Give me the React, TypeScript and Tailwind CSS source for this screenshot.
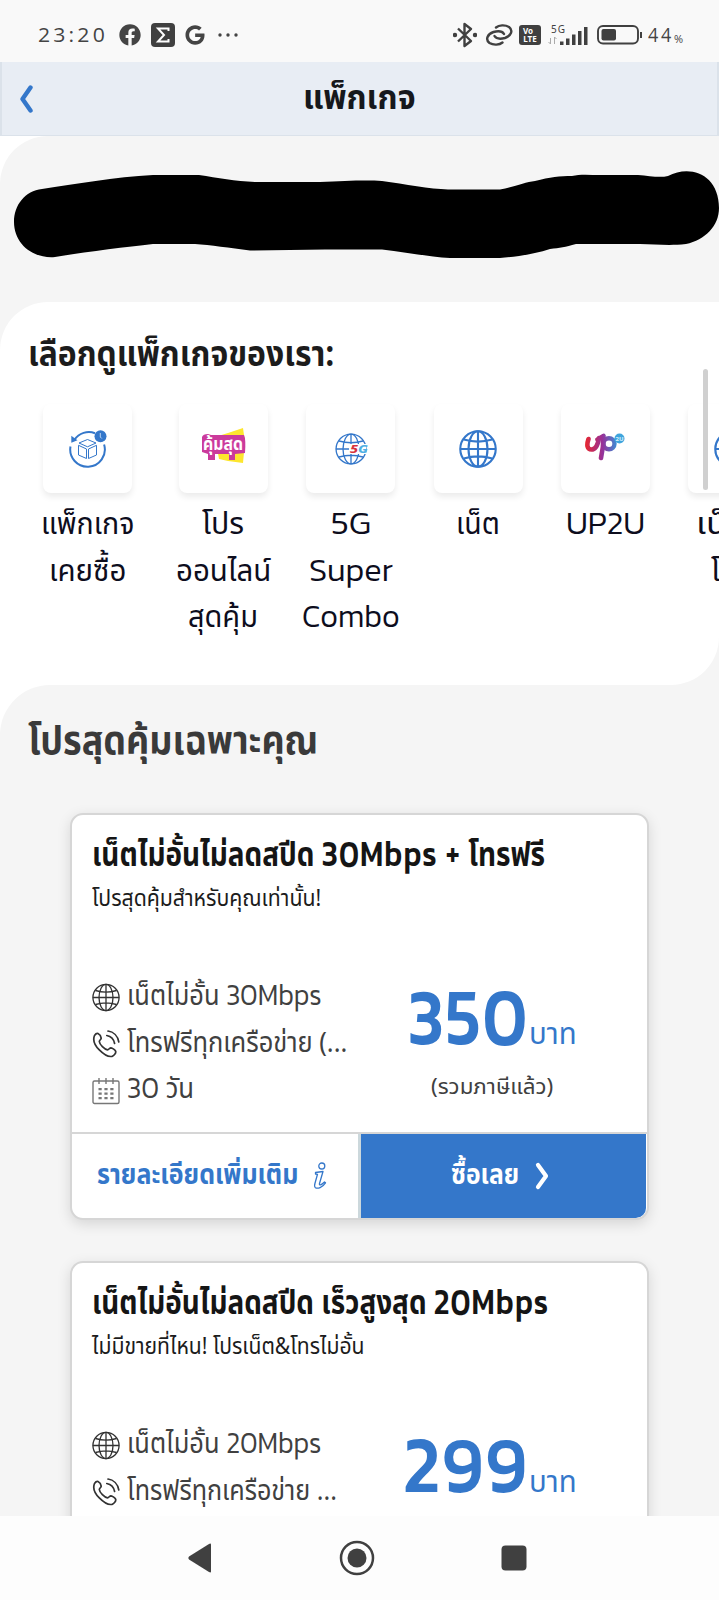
import React, { useLayoutEffect, useRef, useState } from 'react';
import { FaFacebook } from 'react-icons/fa';
import { FaGoogle } from 'react-icons/fa6';

const BLUE = '#3477ca';

// Squeezes a single line of text into the width given by its class
const FitText = ({ className = '', children }: { className?: string; children: React.ReactNode }) => {
  const outer = useRef<HTMLSpanElement>(null);
  const inner = useRef<HTMLSpanElement>(null);
  const [scale, setScale] = useState(1);

  useLayoutEffect(() => {
    if (outer.current && inner.current) {
      setScale(outer.current.clientWidth / inner.current.offsetWidth);
    }
  }, [children]);

  return (
    <span ref={outer} className={`block shrink-0 ${className}`}>
      <span ref={inner} className="inline-block origin-left whitespace-nowrap" style={{ transform: `scaleX(${scale})` }}>
        {children}
      </span>
    </span>
  );
};

const Latin = ({ className = '', children }: { className?: string; children: React.ReactNode }) => (
  <span className={`leading-none font-['Kanit','Noto_Sans',sans-serif] ${className}`}>{children}</span>
);

const GlobeIcon = ({ className, color, stroke = 1.7 }: { className: string; color: string; stroke?: number }) => (
  <svg viewBox="0 0 36 36" fill="none" stroke={color} strokeWidth={stroke} className={className}>
    <circle cx="18" cy="18" r="16.8" />
    <ellipse cx="18" cy="18" rx="9" ry="16.8" />
    <path d="M18 1v34M1 18h34M4.5 9q13.500 4 27 0M4.500 27q13.500-4 27 0" />
  </svg>
);

const PhoneIcon = () => (
  <svg viewBox="0 0 28 28" fill="none" stroke="#333" strokeWidth="1.700" strokeLinecap="round" strokeLinejoin="round" className="h-7 w-7 shrink-0">
    <path d="M2.500 5.500C3.500 4 5 3.200 6 3.500c1.500.8 3 3.200 3.200 4.600.1 1.200-1.800 2-1.900 3.400.3 3 5.200 8 8.200 8.300 1.500 0 2-2 3.400-2 1.500.2 4.300 2.200 4.800 3.600.4 1.600-1.700 4.400-3.700 5C13.500 27.600-1.500 15 2.500 5.500Z" />
    <path d="M16 1c5.500.8 9.800 5 10.800 11M14.800 5.500c4.300.8 7 3.700 7.800 8" />
  </svg>
);

const CalendarIcon = () => (
  <svg viewBox="0 0 28 28" fill="none" stroke="#777" strokeWidth="1.400" className="h-7 w-7 shrink-0">
    <rect x="1" y="4" width="26" height="22.500" rx="1.500" />
    <path d="M7 1v6M14 1v6M21 1v6" />
    <path d="M6.500 12.200h15M6.500 16.700h15M6.500 21.200h15" strokeWidth="2.200" strokeDasharray="3.200 2.700" />
  </svg>
);

const BoxIcon = () => (
  <svg viewBox="0 0 40 40" fill="none" stroke={BLUE} className="h-10 w-10">
    <path d="M2.500 17.500a17.300 17.300 0 1 0 33.600-2M6.500 10.800A17.300 17.300 0 0 1 27 4.200" strokeWidth="2" />
    <path d="M3.300 6.800v7l6.200-2.600Z" fill={BLUE} stroke="none" />
    <circle cx="32.500" cy="7.300" r="6" fill={BLUE} stroke="none" />
    <path d="M32.300 4v4l1.500 1.500" stroke="#b9d4f2" strokeWidth="1" />
    <path d="M19.500 10.500 28 14l-8.500 3.800L11 14ZM10.500 16.300l8 3.700v9.500l-8-3.500ZM28.500 16.300l-8 3.700v9.500l8-3.500Z" strokeWidth="1" strokeLinejoin="round" />
  </svg>
);

const ValueIcon = () => (
  <svg viewBox="0 0 46 38" className="-mt-1.5 h-[38px] w-[46px]">
    <path d="M28 6 43 1l2 14-2 21-15-2-9-2-4-22Z" fill="#fde62e" />
    <path d="M2 10q1-3 6-3l3 1h33q2 4 1 18l-10 1v6h-6v-6H15v6H8v-6l-6-2Z" fill="#cb3a9c" />
    <text x="23" y="23" textAnchor="middle" fontSize="17" fontWeight="700" fill="#fff" textLength="40" lengthAdjust="spacingAndGlyphs">คุ้มสุด</text>
  </svg>
);

const ComboIcon = () => (
  <div className="relative">
    <GlobeIcon className="h-8 w-8" color={BLUE} stroke={1.500} />
    <svg viewBox="0 0 24 14" className="absolute top-[9px] left-[14px] h-[14px] w-6">
      <rect x="0" y="2" width="17" height="10" fill="#fff" />
      <text x="1" y="11" fontSize="11" fontWeight="800" fontStyle="italic" fontFamily="Noto Sans, sans-serif" textLength="18" lengthAdjust="spacingAndGlyphs">
        <tspan fill="#d8323c">5</tspan>
        <tspan fill="#4fb0e4">G</tspan>
      </text>
    </svg>
  </div>
);

const UpIcon = () => (
  <svg viewBox="0 0 40 28" fill="none" className="-mt-1 h-7 w-10">
    <defs>
      <linearGradient id="up" gradientUnits="userSpaceOnUse" x1="0" y1="0" x2="32" y2="0">
        <stop offset="0" stopColor="#e8262e" />
        <stop offset=".55" stopColor="#96329a" />
        <stop offset="1" stopColor="#3a8fd6" />
      </linearGradient>
    </defs>
    <path d="M3.500 6c-2 6-1.500 10.500 3 10.500S13 11 14 5M12.500 6.500 18.500 3c0 7-.5 13-2.500 22" stroke="url(#up)" strokeWidth="4.600" strokeLinecap="round" strokeLinejoin="round" />
    <ellipse cx="24" cy="10.800" rx="5.500" ry="5.500" stroke="url(#up)" strokeWidth="4.400" />
    <circle cx="34.500" cy="5.500" r="5" fill="#3fa5dd" />
    <text x="34.500" y="8" textAnchor="middle" fontSize="6" fontWeight="700" fill="#d9f1ff">2U</text>
  </svg>
);

const StatusBar = () => (
  <div className="flex h-[62px] items-center justify-between bg-[#f9f9f9] pt-2 pr-[36px] pl-[38px] text-[#444]">
    <div className="flex items-center">
      <FitText className="w-[70px] text-[20px] tracking-[3px] font-['Open_Sans',sans-serif]">23:20</FitText>
      <FaFacebook className="ml-[11px] h-[22px] w-[22px]" />
      <svg viewBox="0 0 24 24" className="ml-[10px] h-[24px] w-[24px]">
        <rect width="24" height="24" rx="4" fill="#404040" />
        <path d="M17.500 8V5.500H7l6 6.500-6 6.500h10.500V16" fill="none" stroke="#fff" strokeWidth="2" />
      </svg>
      <FaGoogle className="ml-[10px] h-[20px] w-[20px]" />
      <svg viewBox="0 0 20 4" fill="#444" className="ml-[13px] h-1 w-5">
        <circle cx="2" cy="2" r="1.700" />
        <circle cx="10" cy="2" r="1.700" />
        <circle cx="18" cy="2" r="1.700" />
      </svg>
    </div>
    <div className="flex items-center">
      <svg viewBox="0 0 24 26" fill="none" stroke="#404040" strokeWidth="2.400" strokeLinejoin="round" className="h-[26px] w-6">
        <path d="M5 6.500 18 19l-6.500 5V2L18 7 5 19.500" />
        <circle cx="2" cy="13" r="1" fill="#404040" />
        <circle cx="22" cy="13" r="1" fill="#404040" />
      </svg>
      <svg viewBox="0 0 28 22" fill="none" stroke="#404040" strokeWidth="2.400" strokeLinecap="round" className="ml-[8px] h-[22px] w-7">
        <path d="M11 3.500c3-2.500 9-3 13-.5 4.500 3.500 2 9-4 11-5 1.300-9 .5-10.500-2" />
        <path d="M17.500 18.500c-3 2.500-9 3-13 .5-4.500-3.500-2-9 4-11 5-1.300 9-.5 10.500 2" />
      </svg>
      <div className="ml-[6px] flex h-[20px] w-[22px] flex-col items-center justify-center rounded-[3px] bg-[#404040] text-[8px] leading-[8px] font-bold text-white font-['Noto_Sans',sans-serif]">
        <span className="self-start pl-1">Vo</span>
        <span>LTE</span>
      </div>
      <svg viewBox="0 0 42 22" fill="#404040" className="ml-[6px] h-[22px] w-[42px] overflow-visible">
        <text x="4" y="8.500" fontSize="10" fontFamily="Noto Sans, sans-serif" letterSpacing="1">5G</text>
        <path d="M3.500 20v-6M3.500 20l-2-2M7.500 13v7M7.500 13l2 2" stroke="#aaa" fill="none" />
        <path d="M13 17.500h3.500V21H13ZM19 14.500h3.500V21H19ZM25 10.500h3.500V21H25ZM31 7h3.500v14H31ZM37 3h3.500v18H37Z" />
      </svg>
      <svg viewBox="0 0 46 20" fill="none" className="ml-[8px] h-5 w-[46px]">
        <rect x="1" y="1" width="40" height="17.500" rx="5" stroke="#404040" strokeWidth="1.900" />
        <rect x="4.500" y="4" width="14.500" height="11.500" rx="2" fill="#404040" />
        <path d="M44 7v6" stroke="#404040" strokeWidth="2" />
      </svg>
      <FitText className="ml-[5px] w-[26px] text-[20px] tracking-[3px] font-['Open_Sans',sans-serif]">44</FitText>
      <span className="mt-[6px] w-[9px] text-[11px] leading-none font-['Open_Sans',sans-serif]">%</span>
    </div>
  </div>
);

const categories = [
  { icon: <BoxIcon />, lines: [['แพ็กเกจ', 'w-[93px]'], ['เคยซื้อ', 'w-[77px]']], offset: 'ml-[24px] mr-[8.500px]' },
  { icon: <ValueIcon />, lines: [['โปร', 'w-[42px]'], ['ออนไลน์', 'w-[95px]'], ['สุดคุ้ม', 'w-[70px]']] },
  { icon: <ComboIcon />, latin: true, lines: [['5G', 'w-[40px]'], ['Super', 'w-[84px]'], ['Combo', 'w-[98px]']] },
  { icon: <GlobeIcon className="h-[38px] w-[38px]" color={BLUE} stroke={2} />, lines: [['เน็ต', 'w-[44px]']] },
  { icon: <UpIcon />, latin: true, lines: [['UP2U', 'w-[79px]']] },
  { icon: <GlobeIcon className="h-[38px] w-[38px]" color={BLUE} stroke={2} />, lines: [['เน็ต+', 'w-[73px]'], ['โทร', 'w-[43px]']] },
];

const Categories = () => (
  <section className="bg-[#f5f5f5]">
    <div className="relative h-[383px] overflow-hidden rounded-tl-[48px] rounded-br-[48px] bg-white">
      <h2 className="pt-[25px] pl-[28px] text-[36px] leading-[56px] font-bold text-[#1c1c1c]">
        <FitText className="w-[306px]">เลือกดูแพ็กเกจของเรา:</FitText>
      </h2>
      <div className="mt-[21px] flex">
        {categories.map((item, i) => (
          <div key={i} className={`flex w-[127.300px] shrink-0 flex-col items-center ${item.offset ?? ''}`}>
            <div className="flex h-[89px] w-[89px] items-center justify-center rounded-lg bg-white shadow-[0_4px_6px_rgba(0,0,0,0.08)]">
              {item.icon}
            </div>
            <div className="mt-[9px] flex flex-col items-center text-[31px] leading-[46.700px] text-[#0d0d1d]">
              {item.lines.map(([text, width]) => (
                <FitText key={text} className={`h-[46.700px] ${width}`}>
                  {item.latin ? <Latin className="text-[33px] font-light">{text}</Latin> : text}
                </FitText>
              ))}
            </div>
          </div>
        ))}
      </div>
      <div className="absolute top-[67px] right-[11px] h-[121px] w-[5px] rounded-full bg-[#d0d0d0]" />
    </div>
  </section>
);

interface Plan {
  title: React.ReactNode;
  titleWidth: string;
  subtitle: string;
  subtitleWidth: string;
  speed: string;
  calls: string;
  callsWidth: string;
  price: string;
  priceWidth: string;
}

const plans: Plan[] = [
  {
    title: <>เน็ตไม่อั้นไม่ลดสปีด <Latin className="text-[36px] font-medium tracking-[1.300px]">30Mbps +</Latin> โทรฟรี</>,
    titleWidth: 'w-[453px]',
    subtitle: 'โปรสุดคุ้มสำหรับคุณเท่านั้น!',
    subtitleWidth: 'w-[229px]',
    speed: '30Mbps',
    calls: 'โทรฟรีทุกเครือข่าย (...',
    callsWidth: 'w-[220px]',
    price: '350',
    priceWidth: 'w-[121px]',
  },
  {
    title: <>เน็ตไม่อั้นไม่ลดสปีด เร็วสูงสุด <Latin className="text-[36px] font-medium tracking-[1.300px]">20Mbps</Latin></>,
    titleWidth: 'w-[457px]',
    subtitle: 'ไม่มีขายที่ไหน! โปรเน็ต&โทรไม่อั้น',
    subtitleWidth: 'w-[273px]',
    speed: '20Mbps',
    calls: 'โทรฟรีทุกเครือข่าย ...',
    callsWidth: 'w-[210px]',
    price: '299',
    priceWidth: 'w-[126px]',
  },
];

const PlanCard = ({ plan }: { plan: Plan }) => (
  <article className="mx-auto h-[407px] w-[579px] shrink-0 overflow-hidden rounded-[13px] border-2 border-[#d6d6d6] bg-white shadow-[0_4px_14px_rgba(0,0,0,0.13)]">
    <div className="h-[317px] pl-[20px]">
      <h3 className="h-[67px] pt-[15px] text-[33px] leading-[52px] font-bold text-[#151515]">
        <FitText className={plan.titleWidth}>{plan.title}</FitText>
      </h3>
      <p className="text-[23px] leading-[34px] text-[#1c1c1c]">
        <FitText className={plan.subtitleWidth}>{plan.subtitle}</FitText>
      </p>
      <div className="mt-[58px] flex">
        <ul className="w-[292px] text-[28px] leading-[46.700px] text-[#404040]">
          <li className="flex h-[46.700px] items-center gap-[7px]">
            <GlobeIcon className="h-[29px] w-[28px] shrink-0" color="#333" />
            <FitText className="w-[195px]">เน็ตไม่อั้น <Latin className="text-[30px] font-light">{plan.speed}</Latin></FitText>
          </li>
          <li className="flex h-[46.700px] items-center gap-[7px]">
            <PhoneIcon />
            <FitText className={plan.callsWidth}>{plan.calls}</FitText>
          </li>
          <li className="flex h-[46.700px] items-center gap-[7px]">
            <CalendarIcon />
            <FitText className="w-[67px]"><Latin className="text-[30px] font-light">30</Latin> วัน</FitText>
          </li>
        </ul>
        <div className="flex w-[238px] flex-col">
          <div className="flex h-[92px] items-baseline justify-end pr-[45px] text-[#3477ca]">
            <FitText className={`text-[80px] leading-[92px] font-medium tracking-[2px] ${plan.priceWidth}`}><Latin>{plan.price}</Latin></FitText>
            <FitText className="w-[48px] text-[30px]">บาท</FitText>
          </div>
          <FitText className="ml-[47px] mt-[5px] w-[122px] text-[22px] leading-[34px] text-[#404040]">(รวมภาษีแล้ว)</FitText>
        </div>
      </div>
    </div>
    <div className="flex h-[86px] border-t-2 border-[#d6d6d6] pr-px text-[28px] font-bold">
      <button className="flex w-[289px] items-center border-r-[3px] border-[#ccd8dc] pl-[25px] text-[#3477ca]">
        <FitText className="w-[201px]">รายละเอียดเพิ่มเติม</FitText>
        <svg viewBox="0 0 15 28" fill="none" stroke={BLUE} strokeWidth="1.300" strokeLinejoin="round" className="ml-[15px] h-7 w-[15px]">
          <circle cx="8.800" cy="4" r="3" />
          <path d="M2.500 10.500 10 9.500 6.500 21.500c-.6 2 1.500 2 5-1.500l1 .8c-3 4.600-8 6.500-10.300 4.600-1.200-1.200-.6-2.900 0-4.900l2.300-8.200-2-.3Z" />
        </svg>
      </button>
      <button className="flex flex-1 items-center rounded-br-[10px] bg-[#3477ca] pl-[90px] text-white">
        <FitText className="w-[68px]">ซื้อเลย</FitText>
        <svg viewBox="0 0 14 28" fill="none" stroke="#fff" strokeWidth="4.200" strokeLinecap="round" strokeLinejoin="round" className="ml-[16px] h-7 w-[14px]">
          <path d="M3 3l8 11L3 25" />
        </svg>
      </button>
    </div>
  </article>
);

const App = () => (
  <div className="flex h-[1600px] w-[719px] flex-col overflow-hidden bg-white font-['Noto_Sans_Thai','Noto_Sans',sans-serif]">
    <StatusBar />
    <header className="flex h-[74px] shrink-0 items-center border-x-2 border-b border-[#dbe2ea] bg-[#e8edf4] pl-[17px]">
      <svg viewBox="0 0 14 28" fill="none" stroke={BLUE} strokeWidth="4.400" strokeLinecap="round" strokeLinejoin="round" className="h-7 w-[14px]">
        <path d="M11.500 2.500 3.500 14l8 11.500" />
      </svg>
      <h1 className="mt-[2px] ml-[270px] text-[33px] font-bold text-[#16181c]">
        <FitText className="w-[113px]">แพ็กเกจ</FitText>
      </h1>
    </header>

    <div className="h-[166px] shrink-0 rounded-tl-[48px] bg-[#f5f5f5]">
      <svg viewBox="0 136 719 166" className="h-[166px] w-[719px]">
        <path d="M14 222C14 205 25 191 42 189C75 184 115 177 153 175H199C218 178 235 181 255 182H320C345 181 365 180 382 181C405 184 430 189 448 189.500H500C515 187 525 182 535 181C550 177 560 176 572 176C580 174 590 175 600 175H638C650 176 660 178 668 176C690 164 719 174 719 208C719 226 705 240 686 244C668 246 655 244 640 244H576C565 247 560 248 550 249C535 254 515 257 500 258H450C430 257 405 252 382 249.500H325L250 250.500C230 248 210 245 195 244H153C125 247 85 252 55 257C32 259 14 243 14 222Z" />
      </svg>
    </div>

    <Categories />

    <main className="flex min-h-0 flex-1 flex-col gap-[41px] overflow-hidden rounded-tl-[50px] bg-[#f5f5f5]">
      <h2 className="h-[87px] shrink-0 pt-[27px] pl-[28px] text-[39px] leading-[62px] font-bold text-[#3a3a3a]">
        <FitText className="w-[290px]">โปรสุดคุ้มเฉพาะคุณ</FitText>
      </h2>
      {plans.map((plan) => (
        <PlanCard key={plan.price} plan={plan} />
      ))}
    </main>

    <nav className="h-[84px] shrink-0 bg-[#fdfdfd]">
      <svg viewBox="0 0 719 84" fill="#404040" className="h-[84px] w-[719px]">
        <path d="M211 28.500v27q0 1.500-2 .5L189 43.500q-1.500-1.500 0-3L209 28q2-1 2 .5Z" />
        <circle cx="357" cy="42" r="16" fill="none" stroke="#404040" strokeWidth="2.500" />
        <circle cx="357" cy="42" r="9.500" />
        <rect x="501.500" y="29.500" width="25" height="25" rx="4" />
      </svg>
    </nav>
  </div>
);

export default App;
